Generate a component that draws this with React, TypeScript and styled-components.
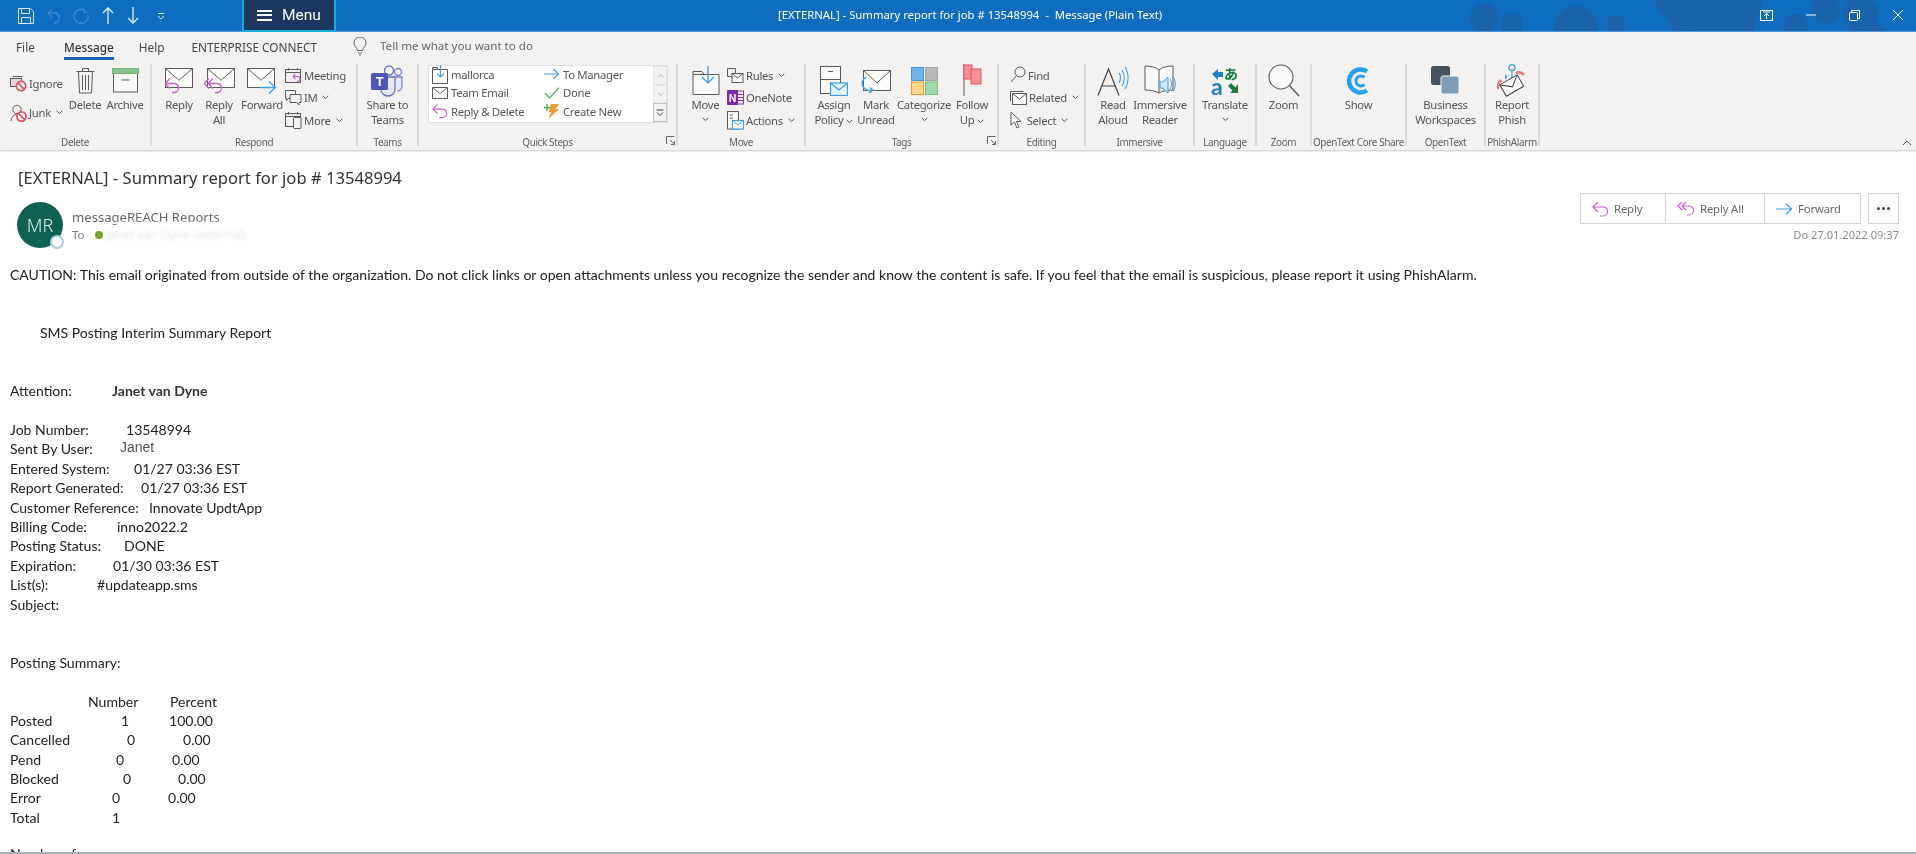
import React from 'react';
import styled, { createGlobalStyle } from 'styled-components';

const Global = createGlobalStyle`
  html, body { margin: 0; padding: 0; background: #fff; overflow: hidden; }
  #root { height: 854px; }
`;
const UI = `"Noto Sans", "Open Sans", sans-serif`;
const MAIL = `Lato, "Noto Sans", sans-serif`;

const Page = styled.div`
  width: 1916px; height: 854px; display: flex; flex-direction: column; overflow: hidden;
  background: #fff; font-family: ${UI}; filter: blur(0.35px);
`;
const TitleBar = styled.header`
  position: relative; height: 31px; flex: none; display: flex; align-items: flex-start;
  background: #0f6dbf; border-bottom: 1px solid #4d97d6; color: #fff;
`;
const TitlePattern = styled.svg`position: absolute; right: 0; top: 0;`;
const Qat = styled.div`width: 242px; height: 31px; display: flex; align-items: center; flex: none; padding-left: 18px; box-sizing: border-box; gap: 13px; position: relative;`;
const QatMore = styled.svg`margin-left: 5px;`;
const MenuButton = styled.div`
  position: relative; width: 94px; height: 32px; flex: none; box-sizing: border-box; background: #1d365f;
  border: 2px solid #14b0dc; border-top: 0; display: flex; align-items: center; gap: 10px; padding-left: 13px;
  font: 400 15.5px Roboto, sans-serif; color: #fff;
`;
const Hamburger = styled.span`display: block; width: 15px; height: 11px; border-top: 2px solid #fff; border-bottom: 2px solid #fff; position: relative; box-sizing: border-box;
  &::after { content: ''; position: absolute; left: 0; right: 0; top: 2.5px; height: 2px; background: #fff; }
`;
const WindowTitle = styled.div`position: relative; margin-left: 442px; font-size: 11.3px; line-height: 30px; white-space: pre; width: 364px;`;
const WindowControls = styled.div`position: relative; margin-left: auto; display: flex; align-items: center; height: 30px; gap: 33px; padding-right: 13px;`;

const TabBar = styled.nav`height: 28px; flex: none; background: #f3f2f1; display: flex; align-items: center; position: relative; font-size: 11.8px; color: #444;`;
const Tab = styled.span<{ $x: number; $active?: boolean }>`
  margin-left: ${p => p.$x}px; line-height: 28px; height: 27px; white-space: nowrap;
  ${p => p.$active ? 'color:#333; font-weight:500; box-shadow: inset 0 -3px 0 #1465b5;' : ''}
`;
const Bulb = styled.svg`margin-left: 36px;`;
const TellMe = styled.span`margin-left: 13px; color: #666; font-size: 11.6px; line-height: 28px; white-space: nowrap;`;

const Ribbon = styled.section`height: 90px; flex: none; box-sizing: border-box; padding-top: 4px; background: #f3f2f1; display: flex; position: relative; box-shadow: 0 1px 2px rgba(0,0,0,.22); z-index: 1;`;
const Group = styled.div<{ $w: number }>`width: ${p => p.$w}px; height: 82px; flex: none; box-sizing: border-box; border-right: 2px solid #dcdad8; display: flex; flex-direction: column;`;
const GroupBody = styled.div<{ $pad?: number; $center?: boolean }>`height: 71px; flex: none; display: flex; padding-left: ${p => p.$pad ?? 0}px; ${p => p.$center ? 'justify-content:center;' : ''}`;
const GroupLabel = styled.div`position: relative; text-align: center; font-size: 9.9px; letter-spacing: -0.35px; line-height: 14px; color: #5f5f5f; white-space: nowrap;`;
const Launcher = styled.svg`position: absolute; right: 1px; top: 1px;`;
const Large = styled.div<{ $w: number }>`width: ${p => p.$w}px; flex: none; display: flex; flex-direction: column; align-items: center; font-size: 11.3px; letter-spacing: -0.3px; line-height: 15px; color: #555; text-align: center; white-space: nowrap;`;
const LargeIcon = styled.div`height: 33px; display: flex; align-items: center; justify-content: center; width: 100%;`;
const ChevLine = styled.div`height: 15px; display: flex; align-items: center; justify-content: center;`;
const Stack = styled.div<{ $top?: number; $w?: number }>`display: flex; flex-direction: column; padding-top: ${p => p.$top ?? 0}px; flex: none; ${p => p.$w ? `width:${p.$w}px;` : ''}`;
const Small = styled.div<{ $h?: number }>`height: ${p => p.$h ?? 22.5}px; display: flex; align-items: center; gap: 2px; font-size: 11.3px; letter-spacing: -0.3px; color: #555; white-space: nowrap;`;
const ChevSvg = styled.svg`margin-left: 3px; flex: none;`;
const ChevNoGap = styled.svg`flex: none;`;

const QuickBox = styled.div`margin-left: 9px; margin-top: 1px; width: 240px; height: 58px; box-sizing: border-box; background: #fff; border: 1px solid #e0dfdd; display: flex;`;
const QuickGrid = styled.div`flex: 1; display: grid; grid-template-columns: 112px 1fr; grid-auto-rows: 18.6px; padding-left: 3px; margin-top: -1px;`;
const QuickItem = styled.div`display: flex; align-items: center; gap: 3px; font-size: 11.3px; letter-spacing: -0.3px; color: #555; white-space: nowrap;`;
const QuickIcon = styled.span`width: 16px; height: 16px; display: flex; align-items: center; justify-content: center; flex: none;`;
const Scroller = styled.div`width: 14px; display: flex; flex-direction: column; flex: none;`;
const ScrollBtn = styled.div<{ $boxed?: boolean }>`flex: 1; display: flex; align-items: center; justify-content: center; background: #f3f2f1; border: 1px solid ${p => p.$boxed ? '#c8c6c4' : '#e6e5e3'};`;
const Collapse = styled.svg`position: absolute; right: 4px; bottom: 4px;`;

const Main = styled.main`flex: 1; min-height: 0; display: flex; flex-direction: column; border-bottom: 2px solid #a8b0b6;`;
const Subject = styled.h1`margin: 15px 0 0 18px; height: 28px; font: 400 16.6px/26px ${UI}; color: #333; white-space: pre;`;
const HeaderRow = styled.div`display: flex; justify-content: space-between; height: 52.5px; padding: 0 17px; flex: none;`;
const Sender = styled.div`display: flex; gap: 9px; margin-top: 9px; position: relative;`;
const Avatar = styled.div`position: relative; width: 46px; height: 46px; border-radius: 50%; background: #0f6152; color: #d6ebe6; font: 300 18px/46px ${UI}; text-align: center;`;
const Presence = styled.span`position: absolute; right: -1px; bottom: -1px; width: 10px; height: 10px; border-radius: 50%; background: #fff; border: 2px solid #a8cbe0;`;
const SenderText = styled.div`display: flex; flex-direction: column; position: relative;`;
const SenderName = styled.div`font-size: 13.1px; line-height: 18px; margin-top: 6px; color: #666; white-space: nowrap;`;
const Smear = styled.div`position: absolute; left: 44px; width: 150px; top: 20px; height: 8px; background: #fff; filter: blur(1px);`;
const ToRow = styled.div`display: flex; align-items: center; font-size: 11.5px; line-height: 18px; margin-top: 0; color: #777;`;
const GreenDot = styled.span`width: 8px; height: 8px; border-radius: 50%; background: #6fa820; margin: 0 3px 0 10px;`;
const Redacted = styled.span`color: #e8e8e8; filter: blur(1.4px); font-size: 12px;`;
const Actions = styled.div`display: flex; flex-direction: column; align-items: flex-end;`;
const ActionRow = styled.div`display: flex; gap: 7px;`;
const ActionGroup = styled.div`display: flex; border: 1px solid #d4d4d4; height: 31px; box-sizing: border-box;`;
const ActionBtn = styled.div<{ $w: number }>`width: ${p => p.$w}px; box-sizing: border-box; padding-left: 11px; gap: 5px; display: flex; align-items: center; font-size: 11.3px; letter-spacing: -0.15px; color: #666; & + & { border-left: 1px solid #d4d4d4; }`;
const MoreBtn = styled.div`width: 31px; height: 31px; box-sizing: border-box; border: 1px solid #d4d4d4; display: flex; align-items: center; justify-content: center; gap: 2px;`;
const Dot = styled.i`width: 3px; height: 3px; border-radius: 50%; background: #444;`;
const DateText = styled.div`font-size: 11.1px; line-height: 16px; margin-top: 3px; color: #8a8a8a;`;

const Body = styled.div`flex: 1; min-height: 0; overflow: hidden; padding-left: 10px; font: 400 14.03px/19.4px ${MAIL}; color: #222;`;
const Line = styled.div<{ $before?: number; $indent?: number }>`display: flex; white-space: pre; height: 19.4px; margin-top: ${p => (p.$before ?? 0) * 19.4}px; padding-left: ${p => p.$indent ?? 0}px;`;
const Cell = styled.span<{ $w: number }>`display: inline-block; width: ${p => p.$w}px; flex: none;`;
const Strong = styled.span`font-weight: 700; color: #333;`;
const Signature = styled.span`font: 400 14px/17px "Liberation Sans", sans-serif; color: #555;`;

const s = '#5a5a5a';
const purple = '#c562c8';
const blue = '#3fa0e6';

const Chev = ({ c = '#555' }: { c?: string }) => <ChevSvg width="7" height="5" viewBox="0 0 7 5"><path d="M.7.8 3.500 3.600 6.300.8" fill="none" stroke={c} strokeWidth="1" /></ChevSvg>;
const LineChev = () => <ChevLine><ChevNoGap width="7" height="5" viewBox="0 0 7 5"><path d="M.7.8 3.500 3.600 6.300.8" fill="none" stroke="#555" strokeWidth="1" /></ChevNoGap></ChevLine>;
const Ban = ({ x, y, r = 4.6 }: { x: number; y: number; r?: number }) => <g fill="none" stroke="#e8505b" strokeWidth="1.8"><circle cx={x} cy={y} r={r} fill="#fff" /><path d={`M${x - r * .7} ${y - r * .7}L${x + r * .7} ${y + r * .7}`} /></g>;
const IgnoreIcon = () => <svg width="17" height="17" viewBox="0 0 17 17" fill="none" stroke={s}><path d="M1.500 3.500h10M2.500 1.500h10" /><rect x=".5" y="3.500" width="11" height="8" fill="#ddd" /><Ban x={11} y={11} /></svg>;
const JunkIcon = () => <svg width="17" height="18" viewBox="0 0 17 18" fill="none" stroke={s}><circle cx="7" cy="5.500" r="4.200" /><path d="M1 17c.5-4 2.500-6 5-6.500" /><Ban x={11.5} y={12.5} /></svg>;
const TrashIcon = () => <svg width="19" height="27" viewBox="0 0 19 27" fill="none" stroke={s}><path d="M.5 4.500h18M6.500 4V1.500h6V4M2.500 5l1 21h12l1-21M6.500 8v15M9.500 8v15M12.500 8v15" /></svg>;
const ArchiveIcon = () => <svg width="27" height="25" viewBox="0 0 27 25"><rect x="1.500" y="5" width="24" height="19" fill="#f8f8f7" stroke={s} /><rect x=".5" y=".5" width="26" height="5" fill="#86c48b" stroke="#74b47a" /><path d="M9.500 12h8" stroke={s} /></svg>;
const Env = ({ w = 27, h = 19, x = .5, y = .5 }: { w?: number; h?: number; x?: number; y?: number }) => <g fill="#fbfbfa" stroke={s}><rect x={x} y={y} width={w} height={h} /><path d={`M${x} ${y}L${x + w / 2} ${y + h * .62}L${x + w} ${y}`} fill="none" /></g>;
const ReplyArrow = ({ x = 0, y = 0 }: { x?: number; y?: number }) => <path transform={`translate(${x} ${y})`} d="M6 .5 1 5.500l5 5M1.200 5.500h8.300c3.500 0 5 2 5 4.500s-2 4.500-4.500 4.500H8" fill="none" stroke={purple} strokeWidth="1.300" />;
const ReplyIcon = () => <svg width="29" height="26" viewBox="0 0 29 26"><Env /><ReplyArrow x={-1} y={10} /></svg>;
const ReplyAllIcon = () => <svg width="31" height="26" viewBox="0 0 31 26"><g transform="translate(3 0)"><Env /></g><ReplyArrow x={3} y={10} /><path d="M5 10.500 0 15.500l5 5" fill="none" stroke={purple} strokeWidth="1.300" /></svg>;
const ForwardIcon = () => <svg width="30" height="26" viewBox="0 0 30 26"><Env /><path d="M13 19.500H28M22 13.500l6.500 6-6.500 6" fill="none" stroke={blue} strokeWidth="1.300" /></svg>;
const CalBase = () => <g fill="none" stroke={s}><rect x=".5" y="2.500" width="15" height="13" /><path d="M.5 5.500h15M3.500 1v2.500M12.500 1v2.500" /></g>;
const MeetingIcon = () => <svg width="17" height="17" viewBox="0 0 17 17"><CalBase /><path d="M8 9.500h4.500c2 0 2.500 1 2.500 2.500s-1 2.500-3 2.500M8 9.500l2.500-2.500M8 9.500l2.500 2.500" stroke={purple} strokeWidth="1.200" fill="#f3f2f1" /></svg>;
const ImIcon = () => <svg width="17" height="17" viewBox="0 0 17 17" fill="#f3f2f1" stroke={s}><path d="M.5 1.500h10v8h-7l-2 2v-2h-1z" /><path d="M5 5.500h11v8h-2v2.500l-2.500-2.500H5z" /></svg>;
const MoreCalIcon = () => <svg width="17" height="18" viewBox="0 0 17 18"><CalBase /><rect x="8.500" y="6.500" width="7.500" height="11" rx="1" fill="#f3f2f1" stroke={s} /></svg>;
const TeamsIcon = () => <svg width="33" height="32" viewBox="0 0 33 32"><circle cx="27" cy="7" r="3.500" fill="none" stroke="#7b83c9" strokeWidth="1.400" /><path d="M22 12h9v9c0 3-2 5-4.500 5" fill="#e8e8f4" stroke="#7b83c9" strokeWidth="1.300" /><circle cx="18" cy="5.500" r="4.500" fill="#f3f2f1" stroke="#6a72c4" strokeWidth="1.400" /><path d="M10 12h14v12c0 4-3 7-7 7s-7-3-7-7z" fill="#e9e9f6" stroke="#6a72c4" strokeWidth="1.300" /><rect x="0" y="8" width="17" height="17" rx="1.500" fill="#4d55b5" /><text x="8.500" y="21" textAnchor="middle" fill="#fff" fontFamily="Liberation Sans" fontWeight="700" fontSize="13">T</text></svg>;
const FolderDown = () => <svg width="16" height="19" viewBox="0 0 16 19"><path d="M.5 4.500h15v14H.5z" fill="#fff" stroke={s} /><path d="M.5 4.500V2.500h5v2" fill="none" stroke={s} /><path d="M8.500 0v12M5 8.500l3.500 3.500 3.500-3.500" fill="none" stroke={blue} strokeWidth="1.200" /></svg>;
const MiniEnv = () => <svg width="16" height="12" viewBox="0 0 16 12"><rect x=".5" y=".5" width="15" height="11" fill="#fff" stroke={s} /><path d="M.5 .5l7.500 6 7.500-6" fill="none" stroke={s} /></svg>;
const MiniReply = () => <svg width="17" height="16" viewBox="0 0 17 16"><path d="M6 1 1 6l5 5M1.200 6h9.300c3.500 0 5 2 5 4.500s-2 4.500-4.500 4.500H8" fill="none" stroke={purple} strokeWidth="1.200" /></svg>;
const MiniArrow = () => <svg width="17" height="12" viewBox="0 0 17 12"><path d="M0 6h15.500M10 .8 15.500 6 10 11.200" fill="none" stroke={blue} strokeWidth="1.200" /></svg>;
const MiniCheck = () => <svg width="16" height="12" viewBox="0 0 16 12"><path d="M1 6l4.500 5L15 .8" fill="none" stroke="#5cb86a" strokeWidth="1.300" /></svg>;
const MiniBolt = () => <svg width="16" height="17" viewBox="0 0 16 17"><path d="M7 1h8l-3.500 5H15L4 16.500 7.500 9H4.500z" fill="#f59a30" /><path d="M3 1v7M0 4.500h6" stroke="#3eaa55" strokeWidth="1.300" /></svg>;
const MoveIcon = () => <svg width="28" height="29" viewBox="0 0 28 29"><path d="M1 8.500h26v20H1z" fill="#fafaf9" stroke={s} /><path d="M1 8.500V5.500h9l2 3" fill="none" stroke={s} /><path d="M16 0v17M10 11l6 6 6-6" fill="none" stroke={blue} strokeWidth="1.400" /></svg>;
const RulesIcon = () => <svg width="17" height="17" viewBox="0 0 17 17" fill="#f3f2f1" stroke={s}><path d="M.5 1.500h8v8h-8z" /><rect x="5" y="6.500" width="11" height="9" fill="#fff" /><path d="M5 6.500l5.500 4.500 5.500-4.500" fill="none" /></svg>;
const OneNoteIcon = () => <svg width="17" height="18" viewBox="0 0 17 18"><rect x="7" y="2" width="9.500" height="13" fill="#f3f2f1" stroke="#7a3bb0" /><path d="M10.500 5.500h6M10.500 8.500h6M10.500 11.500h6" stroke="#7a3bb0" /><rect x="0" y="1" width="11" height="15" rx="1" fill="#7a2cae" /><text x="5.500" y="12.500" textAnchor="middle" fontFamily="Liberation Sans" fontWeight="700" fontSize="10.500" fill="#fff">N</text></svg>;
const ActionsIcon = () => <svg width="17" height="19" viewBox="0 0 17 19"><rect x=".5" y=".5" width="11" height="17.500" fill="#f8f8f8" stroke={s} /><path d="M3 4h3M3 7h3" stroke={s} /><rect x="5.500" y="9.500" width="11" height="8.500" fill="#fff" stroke={blue} strokeWidth="1.200" /><path d="M5.500 9.500l5.500 4.500 5.500-4.500" fill="none" stroke={blue} /></svg>;
const AssignIcon = () => <svg width="28" height="30" viewBox="0 0 28 30"><rect x=".5" y=".5" width="20" height="13" fill="#fbfbfa" stroke={s} /><rect x=".5" y="13.500" width="20" height="14" fill="#fbfbfa" stroke={s} /><path d="M8 5.500h5" stroke={s} /><rect x="10.500" y="17" width="17" height="12.500" fill="#e4f2fc" stroke={blue} strokeWidth="1.300" /><path d="M10.500 17l8.500 7 8.500-7" fill="none" stroke={blue} strokeWidth="1.300" /></svg>;
const MarkUnreadIcon = () => <svg width="30" height="28" viewBox="0 0 30 28"><g transform="translate(2 3)"><Env w={27} h={20} /></g><path d="M5 10c-4 2-5 7-2 11 2 2 5 3 8 2M9 20.500l2.500 2.500-3 3" fill="none" stroke={blue} strokeWidth="1.500" /></svg>;
const CategorizeIcon = () => <svg width="27" height="28" viewBox="0 0 27 28"><rect x=".5" y=".5" width="12" height="13" fill="#70b4ec" stroke="#4a95d6" /><rect x="14.500" y=".5" width="12" height="13" fill="#b9b9b9" stroke="#a5a5a5" /><rect x=".5" y="15" width="12" height="12.500" fill="#fcd88c" stroke="#ef922f" /><rect x="14.500" y="15" width="12" height="12.500" fill="#a2d9a9" stroke="#6fbd7a" /></svg>;
const FlagIcon = () => <svg width="19" height="33" viewBox="0 0 19 33"><path d="M1 0v32" stroke={s} /><rect x="1" y="1" width="8" height="14" fill="#f89098" stroke="#e8505b" /><rect x="8" y="5" width="10" height="15" fill="#f89098" stroke="#e8505b" /></svg>;
const FindIcon = () => <svg width="16" height="18" viewBox="0 0 16 18" fill="none" stroke={s}><circle cx="10" cy="6" r="5" /><path d="M6.500 9.500 1 16" /></svg>;
const RelatedIcon = () => <svg width="17" height="15" viewBox="0 0 17 15"><path d="M.5 11V1.500h13" fill="none" stroke={s} /><rect x="2.500" y="3.500" width="14" height="11" fill="#fff" stroke={s} /><path d="M2.500 3.500l7 5.500 7-5.500" fill="none" stroke={s} /></svg>;
const SelectIcon = () => <svg width="12" height="18" viewBox="0 0 12 18"><path d="M1 1v13l3.500-3 2.500 6 2-1-2.500-5.500H11z" fill="#fff" stroke={s} /></svg>;
const ReadIcon = () => <svg width="32" height="30" viewBox="0 0 32 30"><path d="M1 29.500 11.500 3l10.500 26.500M5 20h13" fill="none" stroke="#444" strokeWidth="1.200" /><path d="M22 7c2 2 2 7 0 10M25 4c3 4 3 12 0 16M28 1c4 6 4 16 0 22" fill="none" stroke={blue} strokeWidth="1.100" /></svg>;
const ImmersiveIcon = () => <svg width="33" height="32" viewBox="0 0 33 32"><path d="M15 5C12 2 6 1 1 1v24c5 0 11 1 14 3 3-2 9-3 14-3V1c-5 0-11 1-14 4zM15 5v23" fill="#f8f8f8" stroke={s} /><path d="M16 17h3l5-5v16l-5-5h-3z" fill="#cfe6f8" stroke={blue} /><path d="M26 14c2 2 2 8 0 10M29 12c3 3 3 11 0 14" fill="none" stroke={blue} /></svg>;
const TranslateIcon = () => <svg width="28" height="42" viewBox="0 -6 28 42"><text x="13" y="13" fontFamily="'Noto Sans CJK JP', sans-serif" fontWeight="700" fontSize="14" fill="#1d7a3e">あ</text><text x="0" y="29" fontFamily="Lato, sans-serif" fontWeight="700" fontSize="23" fill="#1c7fc9">a</text><path d="M1 8 7 3v3h5v5H7v3z" fill="#1c7fc9" /><path d="M27 18v9h-8l2.500-2.500L17 20l3-3 4.500 4.500z" fill="#1d7a3e" /></svg>;
const ZoomIcon = () => <svg width="32" height="33" viewBox="0 0 32 33" fill="none" stroke={s} strokeWidth="1.100"><circle cx="13" cy="13" r="12" fill="#fafaf9" /><path d="M21.500 21.500 31 32" strokeWidth="1.400" /></svg>;
const ShowIcon = () => <svg width="23" height="28" viewBox="0 0 23 28" fill="none" stroke="#23a0ef"><path d="M20 4.500A11.500 11.500 0 1 0 20 23.500" strokeWidth="4.500" /><path d="M17.500 10.500a5 5 0 1 0 0 7" strokeWidth="3" /></svg>;
const WorkspacesIcon = () => <svg width="29" height="29" viewBox="0 0 29 29"><rect x="0" y="0" width="19" height="19" rx="2.500" fill="#48535f" /><rect x="10" y="10" width="18" height="18" rx="2" fill="#7d9db6" stroke="#f3f2f1" strokeWidth="1" /></svg>;
const PhishIcon = () => <svg width="30" height="33" viewBox="0 0 30 33"><circle cx="15" cy="3.500" r="3" fill="none" stroke={blue} strokeWidth="1.300" /><path d="M15 6.500V16" stroke={blue} strokeWidth="1.300" /><path d="M8 16v-6l2.500 3z" fill={blue} /><path d="M19 9c3-1.500 6-.5 8 2" fill="none" stroke="#f0737c" strokeWidth="2.500" /><path d="M1 25c-1-4 0-6 3-9" fill="none" stroke="#f0737c" strokeWidth="2.500" /><g transform="rotate(-30 15 22)"><rect x="5" y="15" width="20" height="13" fill="#fff" stroke="#444" /><path d="M5 15l10 8 10-8" fill="none" stroke="#444" /></g></svg>;
const LauncherIcon = () => <Launcher width="9" height="9" viewBox="0 0 9 9" fill="none" stroke="#666"><path d="M.5 8V.5H8.500M4 4l4.500 4.500M8.500 5v3.500H5" /></Launcher>;

const Chart = () => <TitlePattern width="460" height="31" viewBox="0 0 460 31" fill="#1a62a9"><circle cx="28" cy="18" r="14" /><circle cx="56" cy="24" r="11" /><circle cx="120" cy="28" r="22" /><circle cx="160" cy="24" r="9" /><path d="M197 0h110l-10 32H220z" /><circle cx="235" cy="6" r="22" /><circle cx="340" cy="26" r="12" /><circle cx="370" cy="10" r="14" /><circle cx="405" cy="14" r="18" /><circle cx="420" cy="32" r="8" /></TitlePattern>;
const WinIcon = ({ k }: { k: string }) => {
  if (k === 'disp') return <svg width="13" height="11" viewBox="0 0 13 11" fill="none" stroke="#fff"><rect x=".5" y=".5" width="12" height="10" /><path d="M6.500 9V4M4 6l2.500-2.500L9 6M3 2h7" /></svg>;
  if (k === 'min') return <svg width="10" height="2" viewBox="0 0 10 2"><path d="M0 1h10" stroke="#fff" strokeWidth="1" /></svg>;
  if (k === 'max') return <svg width="11" height="11" viewBox="0 0 11 11" fill="none" stroke="#fff"><rect x=".5" y="2.500" width="8" height="8" rx="1" /><path d="M2.500 2.500V.5h8v8H8.500" /></svg>;
  return <svg width="10" height="10" viewBox="0 0 10 10" stroke="#fff"><path d="M0 0l10 10M10 0 0 10" /></svg>;
};

const meta: [string, number, string][] = [
  ['Job Number:', 116, '13548994'], ['Sent By User:', 110, ''], ['Entered System:', 124, '01/27 03:36 EST'], ['Report Generated:', 131, '01/27 03:36 EST'],
  ['Customer Reference:', 139, 'Innovate UpdtApp'], ['Billing Code:', 107, 'inno2022.2'], ['Posting Status:', 114, 'DONE'], ['Expiration:', 103, '01/30 03:36 EST'], ['List(s):', 87, '#updateapp.sms'], ['Subject:', 0, ''],
];
const stats: [string, number, string, number, string][] = [
  ['Posted', 111, '1', 48, '100.00'], ['Cancelled', 117, '0', 56, '0.00'], ['Pend', 106, '0', 56, '0.00'], ['Blocked', 113, '0', 55, '0.00'], ['Error', 102, '0', 56, '0.00'], ['Total', 102, '1', 0, ''],
];

export default function App() {
  return (
    <Page>
      <Global />
      <TitleBar>
        <Chart />
        <Qat>
          <svg width="16" height="16" viewBox="0 0 16 16" fill="none" stroke="#d8e8f6"><path d="M.5.5h12l3 3v12H.5z" /><path d="M3.500.5v5h8v-5M3.500 15.500v-6h9v6" /></svg>
          <svg width="13" height="16" viewBox="0 0 13 16" fill="none" stroke="#3f8bd0" strokeWidth="1.300"><path d="M5 1 1 5l4 4M1 5h6c3 0 5 2 5 5s-2 5-5 5" /></svg>
          <svg width="16" height="16" viewBox="0 0 16 16" fill="none" stroke="#3f8bd0" strokeWidth="1.300"><path d="M11 2a7 7 0 1 0 4 5M11 .5V4h3.500" /></svg>
          <svg width="12" height="17" viewBox="0 0 12 17" fill="none" stroke="#e6f0fa" strokeWidth="1.300"><path d="M6 17V1M1 6l5-5 5 5" /></svg>
          <svg width="12" height="17" viewBox="0 0 12 17" fill="none" stroke="#e6f0fa" strokeWidth="1.300"><path d="M6 0v16M1 11l5 5 5-5" /></svg>
          <QatMore width="8" height="8" viewBox="0 0 8 8" fill="none" stroke="#e6f0fa"><path d="M1 1.500h6M1 4l3 3 3-3" /></QatMore>
        </Qat>
        <MenuButton><Hamburger />Menu</MenuButton>
        <WindowTitle>[EXTERNAL] - Summary report for job # 13548994  -  Message (Plain Text)</WindowTitle>
        <WindowControls><WinIcon k="disp" /><WinIcon k="min" /><WinIcon k="max" /><WinIcon k="close" /></WindowControls>
      </TitleBar>

      <TabBar>
        <Tab $x={16}>File</Tab>
        <Tab $x={29} $active>Message</Tab>
        <Tab $x={25}>Help</Tab>
        <Tab $x={27}>ENTERPRISE CONNECT</Tab>
        <Bulb width="14" height="19" viewBox="0 0 14 19" fill="none" stroke="#666"><path d="M4.500 13.500C4 10.500 1 9.500 1 6a6 6 0 0 1 12 0c0 3.500-3 4.500-3.500 7.500zM5 16h4M6 18h2" /></Bulb>
        <TellMe>Tell me what you want to do</TellMe>
      </TabBar>

      <Ribbon>
        <Group $w={152}>
          <GroupBody $pad={10}>
            <Stack $top={5} $w={56}>
              <Small $h={29}><IgnoreIcon />Ignore</Small>
              <Small $h={29}><JunkIcon />Junk<Chev /></Small>
            </Stack>
            <Large $w={38}><LargeIcon><TrashIcon /></LargeIcon>Delete</Large>
            <Large $w={42}><LargeIcon><ArchiveIcon /></LargeIcon>Archive</Large>
          </GroupBody>
          <GroupLabel>Delete</GroupLabel>
        </Group>
        <Group $w={206}>
          <GroupBody $pad={7}>
            <Large $w={40}><LargeIcon><ReplyIcon /></LargeIcon>Reply</Large>
            <Large $w={40}><LargeIcon><ReplyAllIcon /></LargeIcon>Reply<br />All</Large>
            <Large $w={46}><LargeIcon><ForwardIcon /></LargeIcon>Forward</Large>
            <Stack>
              <Small><MeetingIcon />Meeting</Small>
              <Small><ImIcon />IM<Chev /></Small>
              <Small><MoreCalIcon />More<Chev /></Small>
            </Stack>
          </GroupBody>
          <GroupLabel>Respond</GroupLabel>
        </Group>
        <Group $w={61}>
          <GroupBody $center><Large $w={56}><LargeIcon><TeamsIcon /></LargeIcon>Share to<br />Teams</Large></GroupBody>
          <GroupLabel>Teams</GroupLabel>
        </Group>
        <Group $w={259}>
          <GroupBody>
            <QuickBox>
              <QuickGrid>
                <QuickItem><QuickIcon><FolderDown /></QuickIcon>mallorca</QuickItem>
                <QuickItem><QuickIcon><MiniArrow /></QuickIcon>To Manager</QuickItem>
                <QuickItem><QuickIcon><MiniEnv /></QuickIcon>Team Email</QuickItem>
                <QuickItem><QuickIcon><MiniCheck /></QuickIcon>Done</QuickItem>
                <QuickItem><QuickIcon><MiniReply /></QuickIcon>Reply &amp; Delete</QuickItem>
                <QuickItem><QuickIcon><MiniBolt /></QuickIcon>Create New</QuickItem>
              </QuickGrid>
              <Scroller>
                <ScrollBtn><svg width="7" height="5" viewBox="0 0 7 5"><path d="M.7 4.200 3.500 1.400 6.300 4.200" fill="none" stroke="#b5b5b5" /></svg></ScrollBtn>
                <ScrollBtn><svg width="7" height="5" viewBox="0 0 7 5"><path d="M.7.8 3.500 3.600 6.300.8" fill="none" stroke="#b5b5b5" /></svg></ScrollBtn>
                <ScrollBtn $boxed><svg width="8" height="8" viewBox="0 0 8 8" fill="none" stroke="#444"><path d="M.5 1h7M1 3.500l3 3 3-3" /></svg></ScrollBtn>
              </Scroller>
            </QuickBox>
          </GroupBody>
          <GroupLabel>Quick Steps<LauncherIcon /></GroupLabel>
        </Group>
        <Group $w={128}>
          <GroupBody $pad={6}>
            <Large $w={43}><LargeIcon><MoveIcon /></LargeIcon>Move<LineChev /></Large>
            <Stack>
              <Small><RulesIcon />Rules<Chev /></Small>
              <Small><OneNoteIcon />OneNote</Small>
              <Small><ActionsIcon />Actions<Chev /></Small>
            </Stack>
          </GroupBody>
          <GroupLabel>Move</GroupLabel>
        </Group>
        <Group $w={193}>
          <GroupBody $pad={6}>
            <Large $w={44}><LargeIcon><AssignIcon /></LargeIcon>Assign<span>Policy<Chev /></span></Large>
            <Large $w={40}><LargeIcon><MarkUnreadIcon /></LargeIcon>Mark<br />Unread</Large>
            <Large $w={56}><LargeIcon><CategorizeIcon /></LargeIcon>Categorize<LineChev /></Large>
            <Large $w={40}><LargeIcon><FlagIcon /></LargeIcon>Follow<span>Up<Chev /></span></Large>
          </GroupBody>
          <GroupLabel>Tags<LauncherIcon /></GroupLabel>
        </Group>
        <Group $w={87}>
          <GroupBody $pad={11}>
            <Stack>
              <Small><FindIcon />Find</Small>
              <Small><RelatedIcon />Related<Chev /></Small>
              <Small><SelectIcon />&nbsp;Select<Chev /></Small>
            </Stack>
          </GroupBody>
          <GroupLabel>Editing</GroupLabel>
        </Group>
        <Group $w={109}>
          <GroupBody $pad={6}>
            <Large $w={42}><LargeIcon><ReadIcon /></LargeIcon>Read<br />Aloud</Large>
            <Large $w={52}><LargeIcon><ImmersiveIcon /></LargeIcon>Immersive<br />Reader</Large>
          </GroupBody>
          <GroupLabel>Immersive</GroupLabel>
        </Group>
        <Group $w={62}>
          <GroupBody $center><Large $w={56}><LargeIcon><TranslateIcon /></LargeIcon>Translate<LineChev /></Large></GroupBody>
          <GroupLabel>Language</GroupLabel>
        </Group>
        <Group $w={55}>
          <GroupBody $center><Large $w={50}><LargeIcon><ZoomIcon /></LargeIcon>Zoom</Large></GroupBody>
          <GroupLabel>Zoom</GroupLabel>
        </Group>
        <Group $w={95}>
          <GroupBody $center><Large $w={60}><LargeIcon><ShowIcon /></LargeIcon>Show</Large></GroupBody>
          <GroupLabel>OpenText Core Share</GroupLabel>
        </Group>
        <Group $w={79}>
          <GroupBody $center><Large $w={70}><LargeIcon><WorkspacesIcon /></LargeIcon>Business<br />Workspaces</Large></GroupBody>
          <GroupLabel>OpenText</GroupLabel>
        </Group>
        <Group $w={54}>
          <GroupBody $center><Large $w={46}><LargeIcon><PhishIcon /></LargeIcon>Report<br />Phish</Large></GroupBody>
          <GroupLabel>PhishAlarm</GroupLabel>
        </Group>
        <Collapse width="10" height="6" viewBox="0 0 10 6" fill="none" stroke="#555"><path d="M1 5l4-4 4 4" /></Collapse>
      </Ribbon>

      <Main>
        <Subject>[EXTERNAL] - Summary report for job # 13548994</Subject>
        <HeaderRow>
          <Sender>
            <Avatar>MR<Presence /></Avatar>
            <SenderText>
              <SenderName>messageREACH Reports</SenderName>
              <Smear />
              <ToRow>To<GreenDot /><Redacted>Janet van Dyne (external)</Redacted></ToRow>
            </SenderText>
          </Sender>
          <Actions>
            <ActionRow>
              <ActionGroup>
                <ActionBtn $w={84}><MiniReply />Reply</ActionBtn>
                <ActionBtn $w={99}><svg width="18" height="16" viewBox="0 0 18 16"><path d="M5 1 1 5l4 4M9 1 5 5l4 4M5.200 5h6.300c3.500 0 5 2 5 4.500s-2 4.500-4.500 4.500h-2" fill="none" stroke={purple} strokeWidth="1.200" /></svg>Reply All</ActionBtn>
                <ActionBtn $w={96}><MiniArrow />Forward</ActionBtn>
              </ActionGroup>
              <MoreBtn><Dot /><Dot /><Dot /></MoreBtn>
            </ActionRow>
            <DateText>Do 27.01.2022 09:37</DateText>
          </Actions>
        </HeaderRow>
        <Body>
          <Line $before={1}>CAUTION: This email originated from outside of the organization. Do not click links or open attachments unless you recognize the sender and know the content is safe. If you feel that the email is suspicious, please report it using PhishAlarm.</Line>
          <Line $before={2} $indent={30}>SMS Posting Interim Summary Report</Line>
          <Line $before={2}><Cell $w={102}>Attention:</Cell><Strong>Janet van Dyne</Strong></Line>
          {meta.map(([label, w, value], i) => (
            <Line key={label} $before={i === 0 ? 1 : 0}>
              <Cell $w={w}>{label}</Cell>
              {label === 'Sent By User:' ? <Signature>Janet</Signature> : value}
            </Line>
          ))}
          <Line $before={2}>Posting Summary:</Line>
          <Line $before={1}><Cell $w={78}> </Cell><Cell $w={82}>Number</Cell>Percent</Line>
          {stats.map(([label, w, n, w2, pct]) => (
            <Line key={label}><Cell $w={w}>{label}</Cell><Cell $w={w2}>{n}</Cell>{pct}</Line>
          ))}
          <Line $before={0.85}>Number of</Line>
        </Body>
      </Main>
    </Page>
  );
}
